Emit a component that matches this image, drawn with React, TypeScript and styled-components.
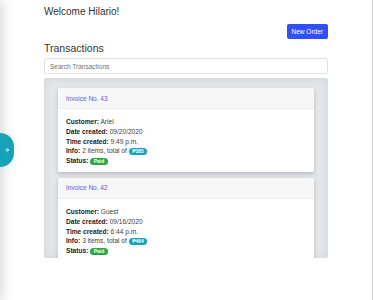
import React from "react";
import styled, { createGlobalStyle } from "styled-components";
import { ArrowRight } from "lucide-react";

const GlobalStyle = createGlobalStyle`
  html, body {
    margin: 0;
    padding: 0;
    background: #ffffff;
    font-family: "Liberation Sans", Arial, sans-serif;
    color: #212529;
  }
`;

interface Transaction {
  id: number;
  customer: string;
  date: string;
  time: string;
  items: number;
  total: string;
  status: string;
}

const transactions: Transaction[] = [
  { id: 43, customer: "Ariel", date: "09/20/2020", time: "9:49 p.m.", items: 2, total: "₱385", status: "Paid" },
  { id: 42, customer: "Guest", date: "09/16/2020", time: "6:44 p.m.", items: 3, total: "₱464", status: "Paid" },
];

const Shell = styled.div`
  min-height: 100vh;
  box-sizing: border-box;
  border-right: 1px solid #cfcfcf;
`;

const Drawer = styled.aside`
  position: fixed;
  top: 0;
  left: -220px;
  width: 220px;
  height: 100vh;
  background: #fff;
  box-shadow: 0 0 14px rgba(0, 0, 0, 0.22);
`;

const DrawerToggle = styled.button`
  position: fixed;
  top: 133px;
  left: 0;
  width: 14px;
  height: 34px;
  padding: 0;
  border: none;
  border-radius: 0 14px 14px 0;
  background: #17a2b8;
  color: #fff;
  display: flex;
  align-items: center;
  justify-content: center;
  box-shadow: 0 0 10px rgba(0, 0, 0, 0.08);
`;

const Main = styled.main`
  width: 284px;
  margin: 0 auto;
  padding-top: 5px;
`;

const Welcome = styled.h4`
  margin: 0;
  font-size: 10px;
  line-height: 14px;
  font-weight: 400;
  color: #333;
`;

const ActionRow = styled.div`
  display: flex;
  justify-content: flex-end;
  margin-top: 5px;
`;

const PrimaryButton = styled.button`
  height: 15px;
  padding: 0 5px;
  border: none;
  border-radius: 2px;
  background: #304ffe;
  color: #fff;
  font-family: inherit;
  font-size: 6.5px;
  line-height: 15px;
`;

const SectionTitle = styled.h5`
  margin: 2px 0 3px;
  font-size: 10.5px;
  line-height: 14px;
  font-weight: 400;
  color: #333;
`;

const SearchInput = styled.input`
  display: block;
  width: 100%;
  box-sizing: border-box;
  height: 16px;
  padding: 0 5px;
  border: 1px solid #dfe2e6;
  border-radius: 2px;
  font-family: inherit;
  font-size: 6.5px;
  color: #495057;
  outline: none;
  &::placeholder {
    color: #6c757d;
  }
`;

const ListPanel = styled.section`
  margin-top: 4px;
  height: 180px;
  overflow: hidden;
  box-sizing: border-box;
  padding: 10px 14px;
  background: #e3e6e9;
  border-radius: 2px;
  box-shadow: inset 0 0 8px rgba(0, 0, 0, 0.08);
  display: flex;
  flex-direction: column;
  gap: 6px;
`;

const Card = styled.article`
  flex-shrink: 0;
  background: #fff;
  border-radius: 2px;
  box-shadow: 0 2px 4px rgba(0, 0, 0, 0.18);
  overflow: hidden;
`;

const CardHeader = styled.header`
  height: 20px;
  padding: 0 8px;
  display: flex;
  align-items: center;
  background: #f7f7f7;
  border-bottom: 1px solid #eee;
  font-size: 6.5px;
  color: #5361ec;
`;

const CardBody = styled.div`
  padding: 8px 8px 6px;
`;

const Line = styled.p`
  margin: 0;
  font-size: 6.6px;
  line-height: 9.8px;
  color: #444;
`;

const Label = styled.strong`
  color: #222;
  font-weight: 700;
`;

const Pill = styled.span<{ $tone: "info" | "success" }>`
  display: inline-block;
  vertical-align: middle;
  padding: 0 3.5px;
  height: 6.5px;
  line-height: 6.5px;
  border-radius: 3.5px;
  font-size: 5px;
  font-weight: 700;
  color: #fff;
  background: ${(p) => (p.$tone === "info" ? "#17a2b8" : "#28a745")};
`;

const TransactionCard = ({ t }: { t: Transaction }) => (
  <Card>
    <CardHeader>Invoice No. {t.id}</CardHeader>
    <CardBody>
      <Line>
        <Label>Customer:</Label> {t.customer}
      </Line>
      <Line>
        <Label>Date created:</Label> {t.date}
      </Line>
      <Line>
        <Label>Time created:</Label> {t.time}
      </Line>
      <Line>
        <Label>Info:</Label> {t.items} items, total of <Pill $tone="info">{t.total}</Pill>
      </Line>
      <Line>
        <Label>Status:</Label> <Pill $tone="success">{t.status}</Pill>
      </Line>
    </CardBody>
  </Card>
);

export default function App() {
  return (
    <Shell>
      <GlobalStyle />
      <Drawer />
      <DrawerToggle aria-label="Open menu">
        <ArrowRight size={6} strokeWidth={3} />
      </DrawerToggle>
      <Main>
        <Welcome>Welcome Hilario!</Welcome>
        <ActionRow>
          <PrimaryButton>New Order</PrimaryButton>
        </ActionRow>
        <SectionTitle>Transactions</SectionTitle>
        <SearchInput placeholder="Search Transactions" />
        <ListPanel>
          {transactions.map((t) => (
            <TransactionCard key={t.id} t={t} />
          ))}
        </ListPanel>
      </Main>
    </Shell>
  );
}
